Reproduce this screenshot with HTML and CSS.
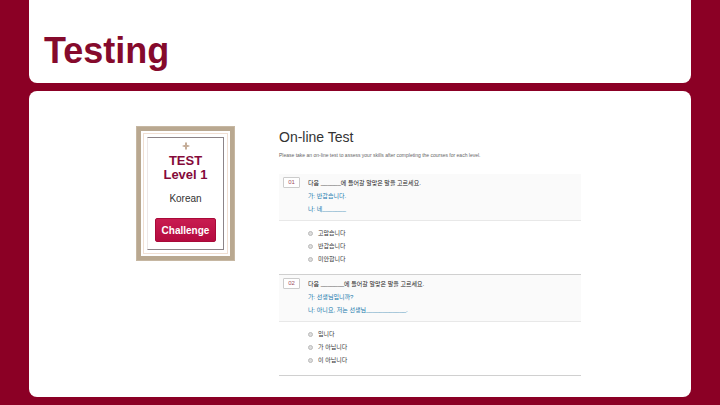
FILE: index.html
```html
<!DOCTYPE html>
<html lang="ko">
<head>
    <meta charset="UTF-8">
    <meta name="viewport" content="width=device-width, initial-scale=1.0">
    <title>Testing</title>
    <link rel="stylesheet" href="styles.css">
</head>
<body>
    <header class="title-panel">
        <h1>Testing</h1>
    </header>

    <main class="content-panel">
        <div class="test-card">
            <div class="test-card-inner">
                <svg class="ornament" viewBox="0 0 8 8" aria-hidden="true">
                    <path d="M4 0 L5 1 L5 3 L6 3 L8 4 L6 5 L5 5 L5 7 L4 8 L3 7 L3 5 L2 5 L0 4 L2 3 L3 3 L3 1 Z"/>
                </svg>
                <h2>TEST<br>Level 1</h2>
                <p>Korean</p>
                <button type="button">Challenge</button>
            </div>
        </div>

        <section class="online-test">
            <h2>On-line Test</h2>
            <p class="intro">Please take an on-line test to assess your skills after completing the courses for each level.</p>

            <form>
                <fieldset class="question" aria-labelledby="q1-text">
                    <div class="question-head">
                        <span class="number">01</span>
                        <div class="question-text">
                            <p id="q1-text">다음 ______에 들어갈 알맞은 말을 고르세요.</p>
                            <p class="dialog">가: 반갑습니다.</p>
                            <p class="dialog">나: 네_______</p>
                        </div>
                    </div>
                    <div class="options">
                        <label><input type="radio" name="q1" value="1">고맙습니다</label>
                        <label><input type="radio" name="q1" value="2">반갑습니다</label>
                        <label><input type="radio" name="q1" value="3">미안합니다</label>
                    </div>
                </fieldset>

                <fieldset class="question" aria-labelledby="q2-text">
                    <div class="question-head">
                        <span class="number">02</span>
                        <div class="question-text">
                            <p id="q2-text">다음 _______에 들어갈 알맞은 말을 고르세요.</p>
                            <p class="dialog">가: 선생님입니까?</p>
                            <p class="dialog">나: 아니요, 저는 선생님____________.</p>
                        </div>
                    </div>
                    <div class="options">
                        <label><input type="radio" name="q2" value="1">입니다</label>
                        <label><input type="radio" name="q2" value="2">가 아닙니다</label>
                        <label><input type="radio" name="q2" value="3">이 아닙니다</label>
                    </div>
                </fieldset>
            </form>
        </section>
    </main>
</body>
</html>
```

FILE: styles.css
```css
* {
    box-sizing: border-box;
}
body {
    display: flex;
    flex-direction: column;
    gap: 8px;
    min-height: 100vh;
    margin: 0;
    padding: 0 29px 8px;
    background-color: #8b0025;
    font-family: "Liberation Sans", "Noto Sans CJK KR", sans-serif;
}
h1, h2, p {
    margin: 0;
}
.title-panel {
    padding: 31px 15px 12px;
    background-color: white;
    border-radius: 0 0 8px 8px;
}
.title-panel h1 {
    color: #850a2c;
    font-size: 36px;
    line-height: 40px;
}
.content-panel {
    display: flex;
    flex: 1;
    align-items: flex-start;
    gap: 44px;
    padding: 35px 110px 20px 107px;
    background-color: white;
    border-radius: 8px;
}

/* 시험 카드 */
.test-card {
    flex: none;
    width: 99px;
    padding: 6px;
    border: 5px solid #b9a890;
    outline: 1px solid #c6b7a2;
    outline-offset: -1px;
    box-shadow: inset 0 0 0 2px #fff, inset 0 0 0 3px #f0dfd3;
}
.test-card-inner {
    display: flex;
    flex-direction: column;
    align-items: center;
    padding: 4px 0 7px;
    border: 1px solid #8c8488;
    border-left-color: #eee8e8;
    text-align: center;
}
.ornament {
    width: 8px;
    height: 8px;
    fill: #c5ad98;
}
.test-card h2 {
    margin-top: 4px;
    color: #850a3a;
    font-size: 13px;
    line-height: 14px;
}
.test-card p {
    margin: 10px 0 12px;
    color: #333;
    font-size: 10px;
    line-height: 14px;
}
.test-card button {
    width: 61px;
    height: 24px;
    padding: 0;
    border: 1px solid #a80a38;
    border-radius: 2px;
    background: linear-gradient(#c81c50, #b50b40);
    color: white;
    font: bold 10px "Liberation Sans", sans-serif;
    cursor: pointer;
}

/* 온라인 테스트 */
.online-test {
    flex: 1;
    padding-top: 2px;
}
.online-test h2 {
    color: #333;
    font-size: 14px;
    font-weight: normal;
    line-height: 18px;
}
.intro {
    margin: 6px 0 15px;
    color: #666;
    font-size: 5px;
    line-height: 7px;
}
.question {
    min-width: 0;
    margin: 0;
    padding: 0;
    border: none;
    border-bottom: 1px solid #d0d0d0;
    font-size: 6px;
    line-height: 13px;
}
.question-head {
    display: flex;
    align-items: flex-start;
    gap: 8px;
    padding: 3px 4px 4px;
    border-bottom: 1px solid #e8e8e8;
    background-color: #fafafa;
}
.number {
    width: 17px;
    border: 1px solid #ccc;
    border-radius: 1px;
    background-color: white;
    color: #a05060;
    line-height: 9px;
    text-align: center;
}
.question-text {
    color: #222;
}
.dialog {
    color: #1478ac;
}
.options {
    display: flex;
    flex-direction: column;
    align-items: flex-start;
    padding: 6px 29px 8px;
    color: #333;
}
.options label {
    display: flex;
    align-items: center;
    gap: 5px;
}
.options input {
    appearance: none;
    width: 5px;
    height: 5px;
    margin: 0;
    border: 1px solid #bbb;
    border-radius: 50%;
    background-color: #ddd;
}
.options input:checked {
    background-color: #2484b4;
}
```
